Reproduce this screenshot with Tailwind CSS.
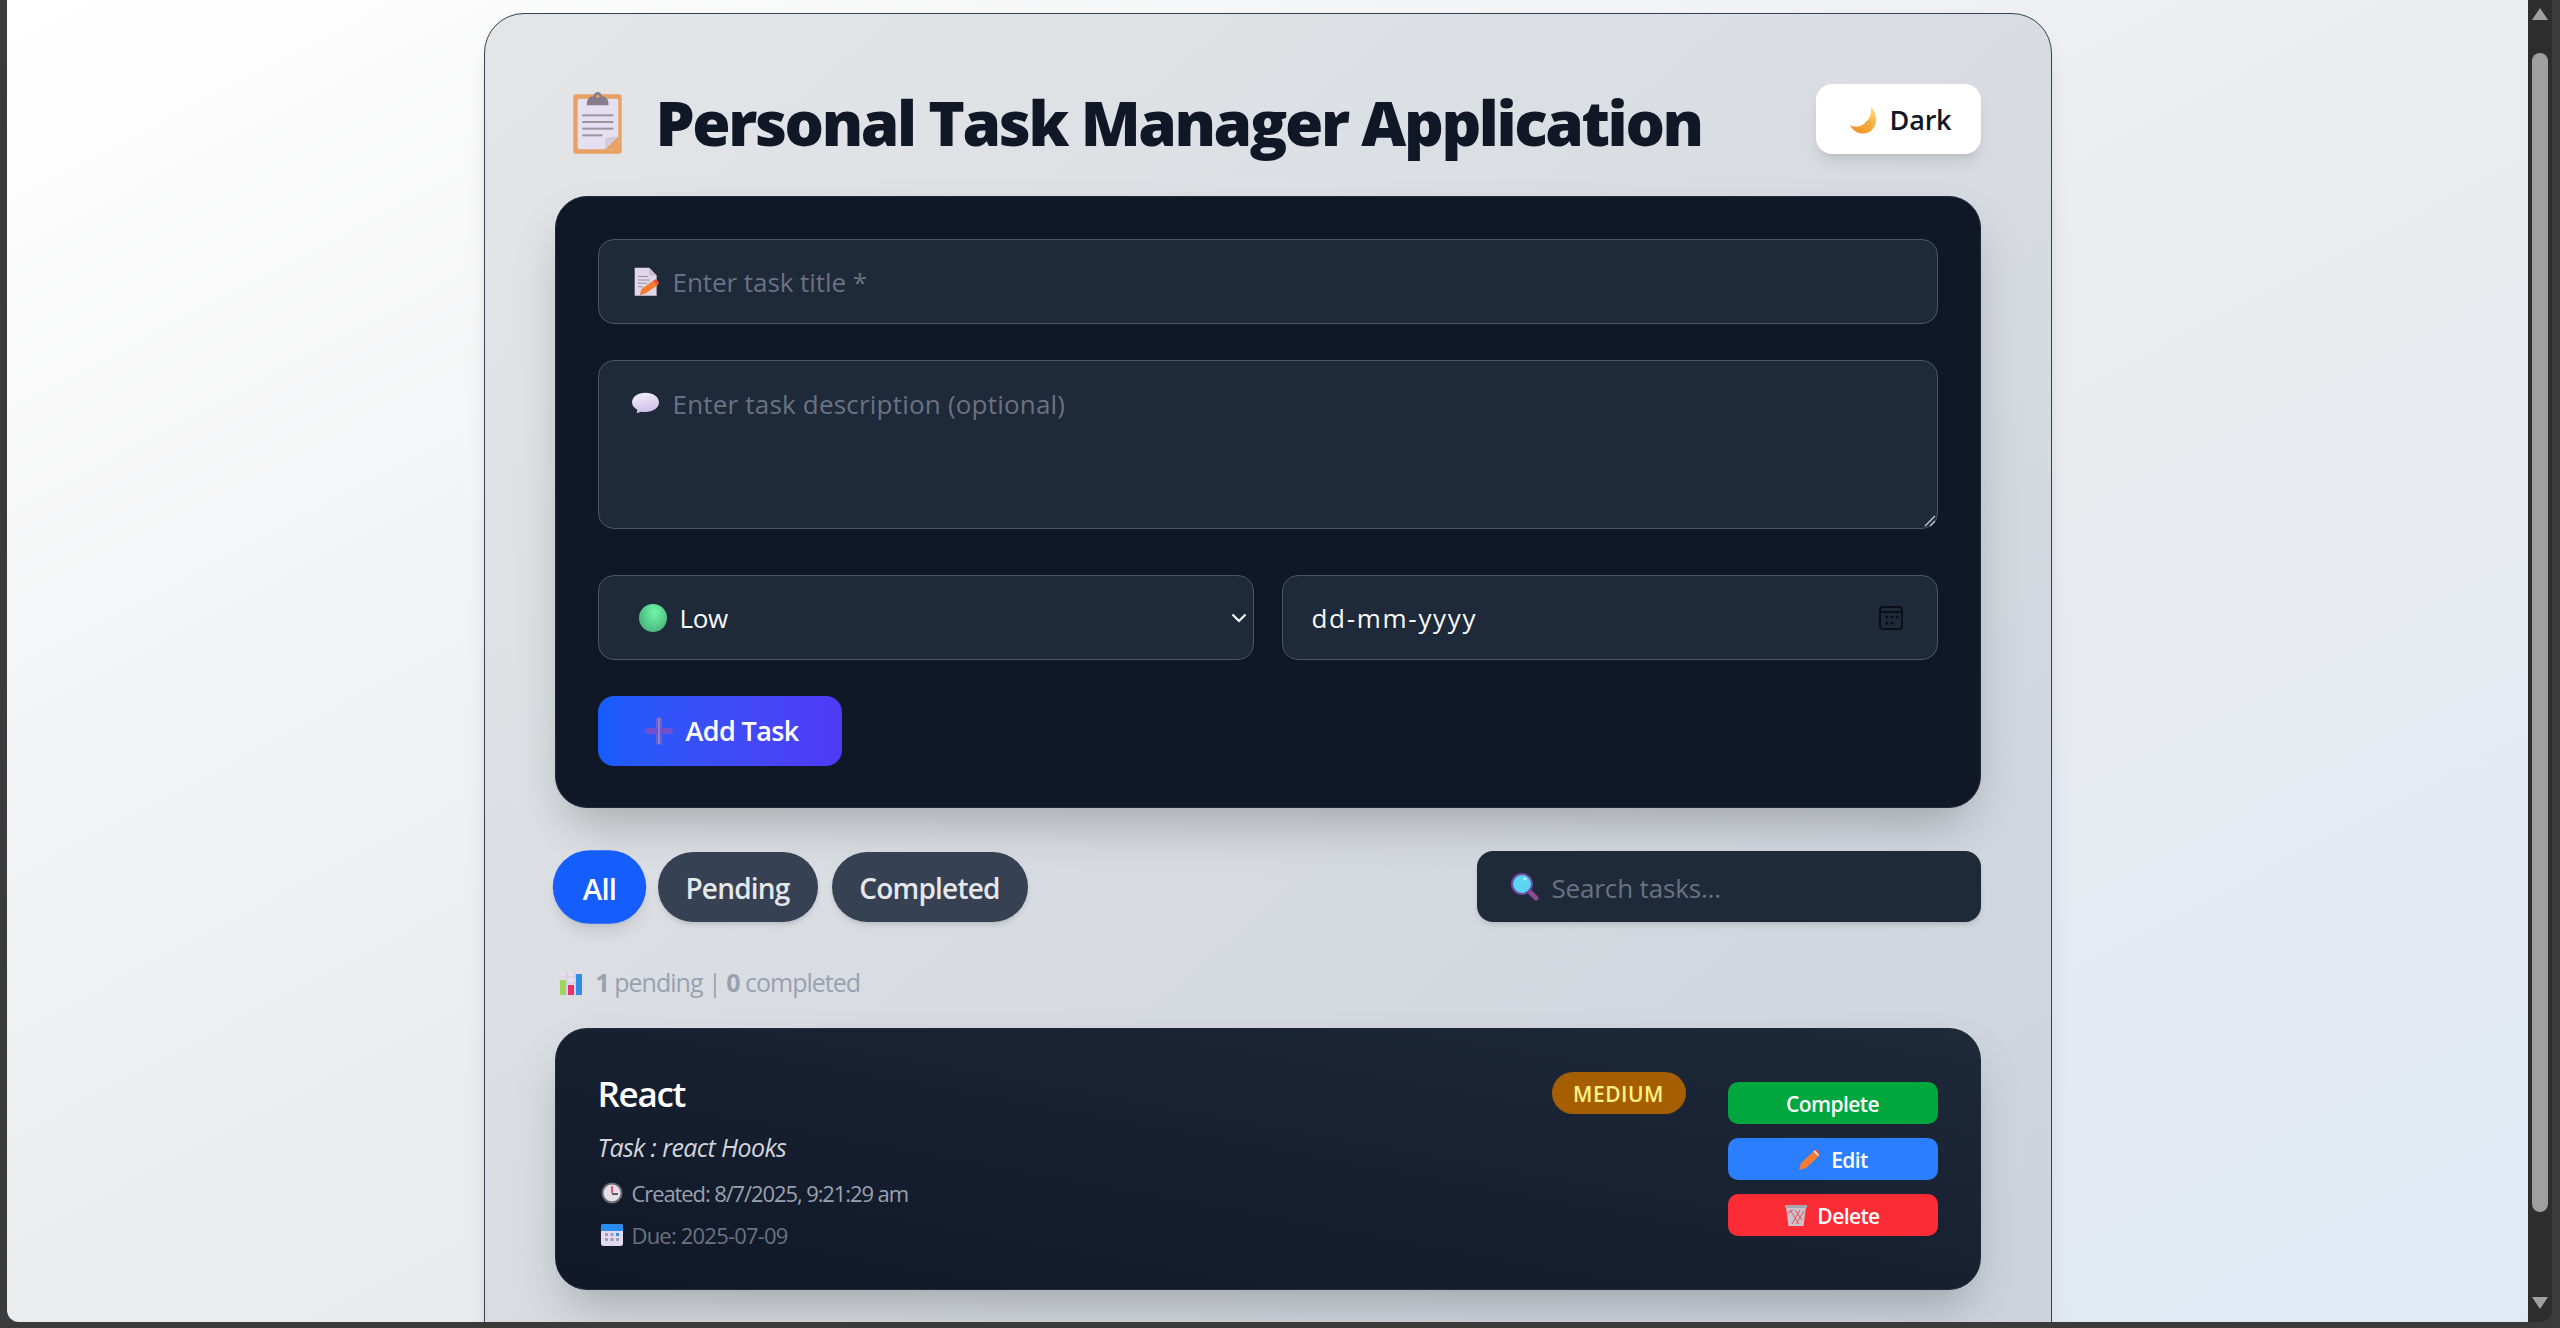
<!DOCTYPE html>
<html lang="en">
<head>
<meta charset="utf-8">
<title>Personal Task Manager Application</title>
<script src="https://cdn.jsdelivr.net/npm/@tailwindcss/browser@4"></script>
</head>
<body class="h-screen w-screen overflow-hidden bg-[#3b3b3b] font-['Open_Sans',sans-serif]">
<div class="flex h-[1322px] pl-[7px] pr-[8px]">
  <main class="h-full w-[2521px] overflow-hidden rounded-bl-[12px] bg-linear-to-br from-white via-[#ebecee] to-[#dfe9f4]">
    <div class="mx-auto mt-[13px] w-[1568px] rounded-[40px] border border-gray-700 bg-linear-to-br from-[#e4e5e7] to-[#ccd3dc] px-[70px] pt-[70px] pb-[70px] shadow-xl">
      <header class="mb-[42px] flex h-[70px] items-center justify-between">
        <h1 class="flex items-center text-[62px] leading-none font-black tracking-[-2.4px] whitespace-nowrap text-gray-900">
          <svg class="mt-[8px] mr-[34px] ml-[18px] h-[62px] w-[49px]" viewBox="40 65 145 186" aria-hidden="true">
            <rect x="40" y="72" width="145" height="178" rx="8" fill="#e8a162"/>
            <rect x="53" y="85" width="122" height="152" rx="6" fill="#e6dff2"/>
            <path d="M175 198 L135 237 H167 Q175 237 175 229Z" fill="#e8a162"/>
            <path d="M135 237 L175 198 Q150 200 135 204Z" fill="#d3cbdc"/>
            <path d="M80 105 Q80 78 100 78 Q104 65 113 65 Q122 65 126 78 Q146 78 146 105Z" fill="#857d8c"/>
            <circle cx="113" cy="78" r="5" fill="#e8a162"/>
            <g fill="#9a94a0"><rect x="67" y="132" width="93" height="6"/><rect x="67" y="152" width="93" height="6"/><rect x="67" y="172" width="93" height="6"/><rect x="67" y="192" width="60" height="6"/></g>
          </svg>
          <span class="mt-[6px]">Personal Task Manager Application</span>
        </h1>
        <button class="flex h-[70px] w-[165px] items-center justify-center rounded-[16px] bg-white pt-[2px] pl-[5px] text-[27px] font-semibold tracking-[-0.2px] text-gray-900 shadow-lg">
          <svg class="mr-[13px] h-[27px] w-[27px]" viewBox="0 0 27 27" aria-hidden="true">
            <defs><linearGradient id="moon" x1="0.8" y1="0" x2="0.3" y2="1"><stop offset="0" stop-color="#ffd873"/><stop offset="1" stop-color="#f28f1f"/></linearGradient></defs>
            <path d="M21 0 C24 3 27 9 26 15 C25 22 19 27 12 26.5 C7 26 2 23 0 18 C4 20.500 9 20 13 17.500 C19 13.500 22 7 21 0Z" fill="url(#moon)"/>
            <circle cx="18" cy="17" r="2.500" fill="none" stroke="#e09a35" stroke-width="0.800"/>
          </svg>
          <span>Dark</span>
        </button>
      </header>

      <section class="rounded-[32px] border border-gray-800 bg-gray-900 px-[42px] pt-[42px] pb-[41px] shadow-2xl">
        <div class="flex h-[85px] items-center rounded-[16px] border border-gray-600 bg-gray-800 pl-[34px] text-[26px] tracking-[-0.05px] text-gray-500">
          <svg class="mr-[13px] h-[30px] w-[27px]" viewBox="130 85 80 88" aria-hidden="true">
            <path d="M135 87 H178 L200 110 V170 H135Z" fill="#e0d8e8"/>
            <path d="M178 87 L200 110 H178Z" fill="#c3bccb"/>
            <g stroke="#98919f" stroke-width="3"><path d="M145 113 H175M145 123 H180M145 133 H172M145 143 H160"/></g>
            <path d="M150 168 L155 150 L192 124 L205 137 L168 162Z" fill="#f57c30"/>
            <path d="M190 126 L198 120 L208 131 L202 138Z" fill="#f0503c"/>
          </svg>
          <span class="mt-[2px]">Enter task title *</span>
        </div>
        <div class="relative mt-[36px] flex h-[169px] items-start rounded-[16px] border border-gray-600 bg-gray-800 pt-[24px] pl-[33px] text-[26px] tracking-[0.2px] text-gray-500">
          <svg class="mt-[7px] mr-[14px] h-[22px] w-[27px]" viewBox="127 460 81 62" aria-hidden="true">
            <defs><linearGradient id="bubble" x1="0" y1="0" x2="0.3" y2="1"><stop offset="0" stop-color="#f7f2fd"/><stop offset="1" stop-color="#cfc0ea"/></linearGradient></defs>
            <path d="M167 460 C190 460 208 472 208 489 C208 506 190 518 167 518 Q160 518 154 517 L141 522 L143 511 C133 506 127 498 127 489 C127 472 145 460 167 460Z" fill="url(#bubble)"/>
          </svg>
          <span>Enter task description (optional)</span>
          <svg class="absolute right-[1px] bottom-[1px] h-[13px] w-[13px]" viewBox="0 0 13 13" aria-hidden="true"><path d="M12 2 L2 12 M12 7 L7 12" stroke="#c8ccd2" stroke-width="1.400"/></svg>
        </div>
        <div class="mt-[46px] flex gap-[28px]">
          <div class="flex h-[85px] w-[656px] items-center rounded-[16px] border border-gray-600 bg-gray-800 pr-[6px] pl-[40px] text-[26px] tracking-[-0.3px] text-gray-50">
            <span class="mr-[13px] h-[28px] w-[28px] rounded-full bg-radial-[at_55%_30%] from-[#70f7a8] to-[#3f9f6f]"></span>
            <span class="mt-[2px]">Low</span>
            <svg class="ml-auto h-[10px] w-[16px]" viewBox="0 0 16 10" aria-hidden="true"><path d="M1.500 1.500 L8 8 L14.500 1.500" fill="none" stroke="#fff" stroke-width="2.200"/></svg>
          </div>
          <div class="flex h-[85px] w-[656px] items-center rounded-[16px] border border-gray-600 bg-gray-800 pr-[34px] pl-[29px] text-[26px] tracking-[1.7px] text-gray-50">
            <span class="mt-[2px]">dd-mm-yyyy</span>
            <svg class="ml-auto h-[24px] w-[24px]" viewBox="0 0 24 24" aria-hidden="true">
              <rect x="1" y="1" width="22" height="22" rx="3" fill="none" stroke="#0a0d14" stroke-width="1.800"/>
              <path d="M1 6 H23" stroke="#0a0d14" stroke-width="1.800"/>
              <g fill="#0a0d14"><circle cx="8" cy="11" r="1.500"/><circle cx="13" cy="11" r="1.500"/><circle cx="18" cy="11" r="1.500"/><circle cx="8" cy="17" r="1.500"/><circle cx="13" cy="17" r="1.500"/></g>
            </svg>
          </div>
        </div>
        <button class="mt-[36px] flex h-[70px] w-[244px] items-center rounded-[16px] bg-linear-to-r from-blue-600 to-indigo-600 pl-[47px] text-[27px] font-semibold tracking-[-0.6px] text-white">
          <svg class="mr-[13px] h-[28px] w-[28px]" viewBox="0 0 28 28" aria-hidden="true">
            <rect x="11" y="0" width="6" height="28" rx="3" fill="#6d5fc4"/>
            <rect x="0" y="11" width="28" height="6" rx="3" fill="#7050cf"/>
            <rect x="13" y="1" width="2" height="26" fill="#8b80d8"/>
          </svg>
          <span>Add Task</span>
        </button>
      </section>

      <div class="mt-[43px] flex items-center justify-between">
        <div class="flex gap-[14px]">
          <button class="h-[70px] w-[89px] scale-105 rounded-full bg-blue-600 pt-[2px] text-[28px] font-semibold tracking-[-0.8px] text-white shadow-lg">All</button>
          <button class="h-[70px] w-[160px] rounded-full bg-gray-700 pt-[2px] text-[28px] font-semibold tracking-[-0.8px] text-gray-200 shadow-md">Pending</button>
          <button class="h-[70px] w-[196px] rounded-full bg-gray-700 pt-[2px] text-[28px] font-semibold tracking-[-0.8px] text-gray-200 shadow-md">Completed</button>
        </div>
        <div class="flex h-[71px] w-[504px] items-center rounded-[16px] bg-gray-800 pl-[34px] text-[26px] tracking-[-0.15px] text-gray-500 shadow-md">
          <svg class="mr-[13px] h-[28px] w-[28px]" viewBox="0 0 28 28" aria-hidden="true">
            <path d="M18 18 L25 25" stroke="#8a4a90" stroke-width="5" stroke-linecap="round"/>
            <circle cx="11" cy="11" r="10" fill="#5cd3f0" stroke="#6f4a9e" stroke-width="2"/>
            <circle cx="14" cy="6" r="1.500" fill="#cdf3fb"/>
          </svg>
          <span class="mt-[3px]">Search tasks...</span>
        </div>
      </div>

      <p class="mt-[41px] flex h-[40px] items-center pl-[4px] text-[25px] tracking-[-1px] text-gray-400">
        <svg class="mr-[13px] h-[24px] w-[24px]" viewBox="0 0 24 24" aria-hidden="true">
          <rect width="24" height="24" fill="#e5deea"/>
          <path d="M0 6 H24 M0 12 H24 M0 18 H24 M8 0 V24 M16 0 V24" stroke="#cfc8d6" stroke-width="1"/>
          <rect x="1" y="9" width="6" height="15" fill="#9ed65c"/>
          <rect x="9" y="14" width="6" height="10" fill="#e8306e"/>
          <rect x="17" y="3" width="6" height="21" fill="#2d8ee8"/>
        </svg>
        <span><b class="font-bold">1</b> pending | <b class="font-bold">0</b> completed</span>
      </p>

      <article class="mt-[25px] flex h-[262px] rounded-[32px] border border-gray-800 bg-linear-to-bl from-gray-800 to-gray-900 pl-[42px] shadow-2xl">
        <div class="flex-1 pt-[42px]">
          <h2 class="text-[35px] leading-[46px] font-semibold tracking-[-1.3px] text-white">React</h2>
          <p class="mt-[12px] text-[25px] leading-[36px] tracking-[-0.6px] text-gray-300 italic">Task : react Hooks</p>
          <p class="mt-[13px] flex h-[30px] items-center text-[22px] tracking-[-1.1px] text-gray-400">
            <svg class="mr-[9px] ml-[3px] h-[22px] w-[22px]" viewBox="0 0 22 22" aria-hidden="true">
              <circle cx="11" cy="11" r="10.500" fill="#6b6b72"/><circle cx="11" cy="11" r="8.500" fill="#e5dfe6"/>
              <path d="M11 4 V11" stroke="#e8306e" stroke-width="1.600"/><path d="M11 12 H17" stroke="#5b5b66" stroke-width="2"/>
            </svg>
            <span>Created: 8/7/2025, 9:21:29 am</span>
          </p>
          <p class="mt-[12px] flex h-[30px] items-center text-[22px] tracking-[-0.8px] text-gray-500">
            <svg class="mr-[9px] ml-[3px] h-[22px] w-[22px]" viewBox="0 0 22 22" aria-hidden="true">
              <rect width="22" height="22" rx="2.500" fill="#e3daf0"/>
              <path d="M0 7 V2.500 Q0 0 2.500 0 H19.500 Q22 0 22 2.500 V7Z" fill="#2b8cf0"/>
              <g fill="#a49bb5"><rect x="4" y="9" width="3" height="3"/><rect x="9.500" y="9" width="3" height="3"/><rect x="4" y="14" width="3" height="3"/><rect x="9.500" y="14" width="3" height="3"/><rect x="15" y="14" width="3" height="3"/></g>
              <rect x="15" y="9" width="3" height="3" fill="#2b8cf0"/>
            </svg>
            <span>Due: 2025-07-09</span>
          </p>
        </div>
        <div class="mt-[43px] mr-[42px] flex h-[42px] w-[134px] items-center justify-center rounded-full bg-yellow-700 pt-[4px] text-[21px] font-semibold tracking-[0.5px] text-yellow-200">MEDIUM</div>
        <div class="mt-[53px] mr-[42px] flex w-[210px] flex-col gap-[14px] text-[21px] font-semibold tracking-[-0.6px] text-white">
          <button class="h-[42px] rounded-[10px] bg-green-600 pt-[4px]">Complete</button>
          <button class="flex h-[42px] items-center justify-center rounded-[10px] bg-blue-500 pt-[4px]">
            <svg class="mt-[-4px] mr-[11px] ml-[2px] h-[21px] w-[21px]" viewBox="0 0 21 21" aria-hidden="true">
              <path d="M0 21 L2 14 L15 2 L20 7 L7 19Z" fill="#f57c30"/>
              <path d="M14 3 L17 0 L21 4 L18 7Z" fill="#f0503c"/>
              <path d="M15 2 L19.500 6.500" stroke="#f3d9d3" stroke-width="2"/>
            </svg>
            <span>Edit</span>
          </button>
          <button class="flex h-[42px] items-center justify-center rounded-[10px] bg-red-500 pt-[4px]">
            <svg class="mt-[-4px] mr-[10px] h-[21px] w-[22px]" viewBox="0 0 22 21" aria-hidden="true">
              <path d="M1 2 H21 L18.500 21 H3.500Z" fill="#c9c4cc"/>
              <rect x="0" y="0" width="22" height="3" fill="#a9a5ae"/>
              <path d="M5 5 L14 19 M10 5 L17 15 M15 5 L7 19 M19 6 L11 19 M3 8 L8 5" stroke="#e8505a" stroke-width="1"/>
            </svg>
            <span>Delete</span>
          </button>
        </div>
      </article>
    </div>
  </main>
  <aside class="flex h-full w-[24px] flex-col items-center rounded-br-[12px] bg-[#2d2d2d] pt-[8px]">
    <svg class="h-[12px] w-[16px]" viewBox="0 0 16 12" aria-hidden="true"><path d="M8 0 L16 12 H0Z" fill="#a0a0a0"/></svg>
    <div class="mt-[33px] h-[1159px] w-[16px] rounded-full bg-[#9f9f9f]"></div>
    <svg class="mt-[85px] h-[12px] w-[16px]" viewBox="0 0 16 12" aria-hidden="true"><path d="M0 0 H16 L8 12Z" fill="#a0a0a0"/></svg>
  </aside>
</div>
</body>
</html>
